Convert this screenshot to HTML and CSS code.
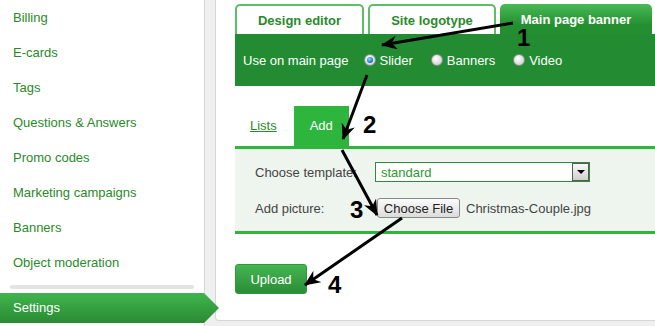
FILE: index.html
```html
<!DOCTYPE html>
<html>
<head>
    <title>Settings - Main page banner</title>
    <link rel="stylesheet" href="styles.css">
</head>
<body>
    <div class="page">
        <div class="sidebar">
            <a class="menuItem" href="#">Billing</a>
            <a class="menuItem" href="#">E-cards</a>
            <a class="menuItem" href="#">Tags</a>
            <a class="menuItem" href="#">Questions &amp; Answers</a>
            <a class="menuItem" href="#">Promo codes</a>
            <a class="menuItem" href="#">Marketing campaigns</a>
            <a class="menuItem" href="#">Banners</a>
            <a class="menuItem" href="#">Object moderation</a>
            <div class="menuSep"></div>
            <a class="menuItem active" href="#">Settings</a>
        </div>
        <div class="gutter"></div>
        <div class="content">
            <div class="tabs">
                <div class="tab tabDesign">Design editor</div>
                <div class="tab tabLogo">Site logotype</div>
                <div class="tab tabBanner active">Main page banner</div>
            </div>
            <div class="bannerBar">
                <span class="barLabel">Use on main page</span>
                <label class="radioOpt"><span class="radio checked"></span>Slider</label>
                <label class="radioOpt"><span class="radio"></span>Banners</label>
                <label class="radioOpt"><span class="radio"></span>Video</label>
            </div>
            <div class="subTabs">
                <a class="subTab link" href="#">Lists</a>
                <span class="subTab current">Add</span>
            </div>
            <div class="addPanel">
                <div class="formRow">
                    <span class="formLabel">Choose template:</span>
                    <div class="fakeSelect">
                        <span>standard</span>
                        <span class="selectBtn"></span>
                    </div>
                </div>
                <div class="formRow">
                    <span class="formLabel">Add picture:</span>
                    <button class="fileBtn" type="button">Choose File</button>
                    <span class="fileName">Christmas-Couple.jpg</span>
                </div>
            </div>
            <button class="uploadBtn" type="button">Upload</button>
        </div>
    </div>

    <svg class="notes" width="655" height="326" viewBox="0 0 655 326">
        <defs>
            <marker id="head" viewBox="0 0 16 14" refX="15" refY="7" markerWidth="16" markerHeight="14" orient="auto" markerUnits="userSpaceOnUse">
                <path d="M0,0 L16,7 L0,14 L5,7 z" fill="#000"/>
            </marker>
        </defs>
        <line x1="513" y1="23" x2="382" y2="45" marker-end="url(#head)"/>
        <line x1="367" y1="75" x2="343" y2="139" marker-end="url(#head)"/>
        <line x1="342" y1="150" x2="377" y2="215" marker-end="url(#head)"/>
        <line x1="402" y1="218" x2="305" y2="285" marker-end="url(#head)"/>
        <text x="517" y="46">1</text>
        <text x="363" y="133">2</text>
        <text x="350" y="218">3</text>
        <text x="328" y="293">4</text>
    </svg>
</body>
</html>
```

FILE: styles.css
```css
* {
    box-sizing: border-box;
}

body {
    margin: 0;
    width: 655px;
    height: 326px;
    overflow: hidden;
    position: relative;
    background-color: #efefef;
    font-family: "Liberation Sans", Arial, sans-serif;
    font-size: 13px;
}

.page {
    display: flex;
    height: 326px;
}

/* left menu */
.sidebar {
    width: 205px;
    flex: none;
    background-color: white;
    border-right: 1px solid #d6d6d6;
}

.menuItem {
    display: block;
    height: 35px;
    line-height: 36px;
    padding-left: 13px;
    color: #2a8a2a;
    text-decoration: none;
}

.menuSep {
    height: 4px;
    margin: 5px 10px 4px;
    border-radius: 2px;
    background-color: #e3e3e3;
}

.menuItem.active {
    position: relative;
    height: 30px;
    line-height: 30px;
    color: white;
    background: linear-gradient(#40b54d, #2a8a33);
}

.menuItem.active::after {
    content: "";
    position: absolute;
    left: 100%;
    top: 0;
    width: 15px;
    height: 30px;
    background: linear-gradient(#40b54d, #2a8a33);
    clip-path: polygon(0 0, 100% 50%, 0 100%);
}

.gutter {
    width: 10px;
    flex: none;
    background-color: #efefef;
}

/* main area */
.content {
    flex: 1;
    height: 321px;
    padding: 4px 0 0 19px;
    background-color: white;
    border-left: 1px solid #d6d6d6;
    border-bottom: 1px solid #d6d6d6;
    border-bottom-left-radius: 4px;
}

.tabs {
    display: flex;
    gap: 4px;
}

.tab {
    height: 30px;
    display: flex;
    align-items: center;
    justify-content: center;
    border: 2px solid #5cbf66;
    border-bottom: none;
    border-radius: 5px 5px 0 0;
    background-color: white;
    color: #2a8a2a;
    font-weight: bold;
}

.tabDesign {
    width: 129px;
}

.tabLogo {
    width: 128px;
}

.tabBanner {
    width: 152px;
}

.tab.active {
    border: none;
    color: white;
    background: linear-gradient(#49b956, #248f30 70%);
}

.bannerBar {
    height: 52px;
    display: flex;
    align-items: center;
    gap: 18px;
    padding-left: 8px;
    background-color: #238c32;
    color: white;
}

.barLabel {
    margin-right: -3px;
}

.radioOpt {
    display: flex;
    align-items: center;
    gap: 4px;
}

.radio {
    width: 12px;
    height: 12px;
    border-radius: 50%;
    border: 1px solid #8c8c8c;
    background: radial-gradient(circle at 40% 35%, #ffffff, #c4c4c4);
    display: flex;
    align-items: center;
    justify-content: center;
}

.radio.checked::before {
    content: "";
    width: 6px;
    height: 6px;
    border-radius: 50%;
    background: radial-gradient(circle at 40% 35%, #8fd4ff, #0a6fc0 70%, #063c70);
}

.subTabs {
    display: flex;
    margin-top: 20px;
}

.subTab {
    height: 40px;
    line-height: 39px;
    padding: 0 15px;
}

.subTab.link {
    color: #2a8a2a;
}

.subTab.current {
    width: 55px;
    margin-left: 2px;
    text-align: center;
    background-color: #2db53d;
    color: white;
}

.addPanel {
    padding: 13px 0 13px 20px;
    background-color: #eef5ee;
    border-top: 3px solid #2db53d;
    border-bottom: 3px solid #2db53d;
    display: flex;
    flex-direction: column;
    gap: 16px;
}

.formRow {
    height: 20px;
    display: flex;
    align-items: center;
}

.formLabel {
    width: 120px;
    color: #444;
}

.fakeSelect {
    width: 215px;
    height: 20px;
    display: flex;
    align-items: center;
    justify-content: space-between;
    padding-left: 5px;
    border: 1px solid #2f8a3a;
    background-color: white;
    color: #2a9a2a;
}

.selectBtn {
    width: 17px;
    height: 18px;
    border: 1px solid #5a5a5a;
    background: linear-gradient(#fafafa, #cfcfcf);
    display: flex;
    align-items: center;
    justify-content: center;
}

.selectBtn::before {
    content: "";
    border-left: 4px solid transparent;
    border-right: 4px solid transparent;
    border-top: 4px solid black;
}

.fileBtn {
    margin-left: 2px;
    width: 83px;
    height: 20px;
    padding: 0;
    border: 1px solid #8a8a8a;
    border-radius: 3px;
    background: linear-gradient(#fbfbfb, #dcdcdc);
    font-family: "Liberation Sans", Arial, sans-serif;
    font-size: 13px;
    color: #222;
}

.fileName {
    margin-left: 6px;
    color: #444;
}

.uploadBtn {
    display: block;
    margin-top: 30px;
    width: 72px;
    height: 30px;
    padding: 0;
    border: 1px solid #2d9a38;
    border-radius: 3px;
    background: linear-gradient(#46b653, #2a8c36);
    color: white;
    font-family: "Liberation Sans", Arial, sans-serif;
    font-size: 13px;
}

/* annotation arrows */
.notes {
    position: absolute;
    left: 0;
    top: 0;
    pointer-events: none;
}

.notes line {
    stroke: black;
    stroke-width: 3;
}

.notes text {
    font-family: "Liberation Sans", Arial, sans-serif;
    font-weight: bold;
    font-size: 24px;
    fill: black;
}
```
